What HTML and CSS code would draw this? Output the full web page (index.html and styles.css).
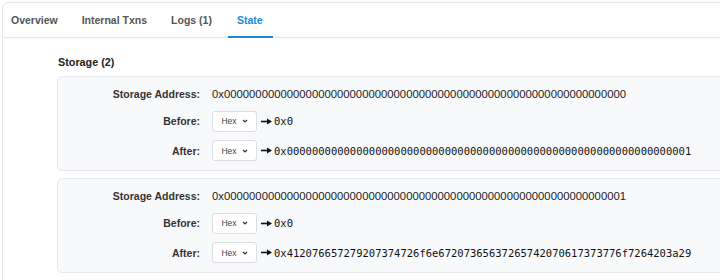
FILE: index.html
```html
<!DOCTYPE html>
<html lang="en">
<head>
  <meta charset="UTF-8">
  <meta name="viewport" content="width=device-width, initial-scale=1">
  <title>Transaction State</title>
  <link rel="stylesheet" href="styles.css">
</head>
<body>
<div class="card">
  <div class="tabs">
    <a class="tab">Overview</a>
    <a class="tab">Internal Txns</a>
    <a class="tab">Logs (1)</a>
    <a class="tab active">State</a>
  </div>
  <div class="content">
    <h3>Storage (2)</h3>
    <div class="slot">
      <div class="label">Storage Address:</div>
      <div class="value">0x0000000000000000000000000000000000000000000000000000000000000000</div>
      <div class="label">Before:</div>
      <div class="value"><span class="select">Hex <svg width="6" height="4" viewBox="0 0 6 4"><path d="M1 1l2 2 2-2" fill="none" stroke="#333" stroke-width="1.2"/></svg></span><svg class="arrow" width="11" height="7" viewBox="0 0 11 7"><path d="M0 3.5h7" stroke="#111" stroke-width="1.6"/><path d="M6 0.5l5 3-5 3z" fill="#111"/></svg><span class="mono">0x0</span></div>
      <div class="label">After:</div>
      <div class="value"><span class="select">Hex <svg width="6" height="4" viewBox="0 0 6 4"><path d="M1 1l2 2 2-2" fill="none" stroke="#333" stroke-width="1.2"/></svg></span><svg class="arrow" width="11" height="7" viewBox="0 0 11 7"><path d="M0 3.5h7" stroke="#111" stroke-width="1.6"/><path d="M6 0.5l5 3-5 3z" fill="#111"/></svg><span class="mono">0x0000000000000000000000000000000000000000000000000000000000000001</span></div>
    </div>
    <div class="slot">
      <div class="label">Storage Address:</div>
      <div class="value">0x0000000000000000000000000000000000000000000000000000000000000001</div>
      <div class="label">Before:</div>
      <div class="value"><span class="select">Hex <svg width="6" height="4" viewBox="0 0 6 4"><path d="M1 1l2 2 2-2" fill="none" stroke="#333" stroke-width="1.2"/></svg></span><svg class="arrow" width="11" height="7" viewBox="0 0 11 7"><path d="M0 3.5h7" stroke="#111" stroke-width="1.6"/><path d="M6 0.5l5 3-5 3z" fill="#111"/></svg><span class="mono">0x0</span></div>
      <div class="label">After:</div>
      <div class="value"><span class="select">Hex <svg width="6" height="4" viewBox="0 0 6 4"><path d="M1 1l2 2 2-2" fill="none" stroke="#333" stroke-width="1.2"/></svg></span><svg class="arrow" width="11" height="7" viewBox="0 0 11 7"><path d="M0 3.5h7" stroke="#111" stroke-width="1.6"/><path d="M6 0.5l5 3-5 3z" fill="#111"/></svg><span class="mono">0x412076657279207374726f6e67207365637265742070617373776f7264203a29</span></div>
    </div>
  </div>
</div>
</body>
</html>
```
FILE: styles.css
```css
body { margin: 0; padding: 2px 0 0 2px; background: #fff; overflow: hidden; font-family: "Liberation Sans", Arial, sans-serif; color: #222; }
.card { width: 800px; height: 400px; border: 1px solid #e6e7ef; border-radius: 6px; background: #fff; }
.tabs { display: flex; height: 34px; border-bottom: 1px solid #e6e7ef; }
.tab { display: flex; align-items: center; padding: 0 9px 0 8px; margin-right: 7px; font-size: 10.5px; font-weight: bold; color: #555; border-bottom: 2px solid transparent; margin-bottom: -1px; }
.tab.active { color: #1d87d6; border-bottom-color: #1d87d6; padding: 0 10px 0 9px; }
.content { padding: 16px 0 0 54px; }
h3 { margin: 0 0 6px 1px; font-size: 10.8px; line-height: 16px; font-weight: bold; color: #222; }
.slot { display: grid; grid-template-columns: 142px 1fr; grid-template-rows: 17px 21px 21px; column-gap: 12px; row-gap: 8.5px; align-items: center; padding: 8px 0 9px; background: #f8f9fb; border: 1px solid #e7e8ee; border-radius: 5px; margin-bottom: 7px; }
.label { text-align: right; font-size: 10.5px; font-weight: bold; color: #333; line-height: 16px; }
.value { display: flex; align-items: center; font-size: 11.3px; color: #222; line-height: 16px; white-space: nowrap; }
.select { display: inline-flex; align-items: center; justify-content: center; gap: 5px; box-sizing: border-box; width: 45px; height: 21px; background: #fff; border: 1px solid #dcdde3; border-radius: 3px; font-size: 8.5px; color: #444; }
.arrow { margin: 0 2px 0 4px; }
.mono { font-family: "DejaVu Sans Mono", "Liberation Mono", monospace; font-size: 10.5px; color: #111; }
```
